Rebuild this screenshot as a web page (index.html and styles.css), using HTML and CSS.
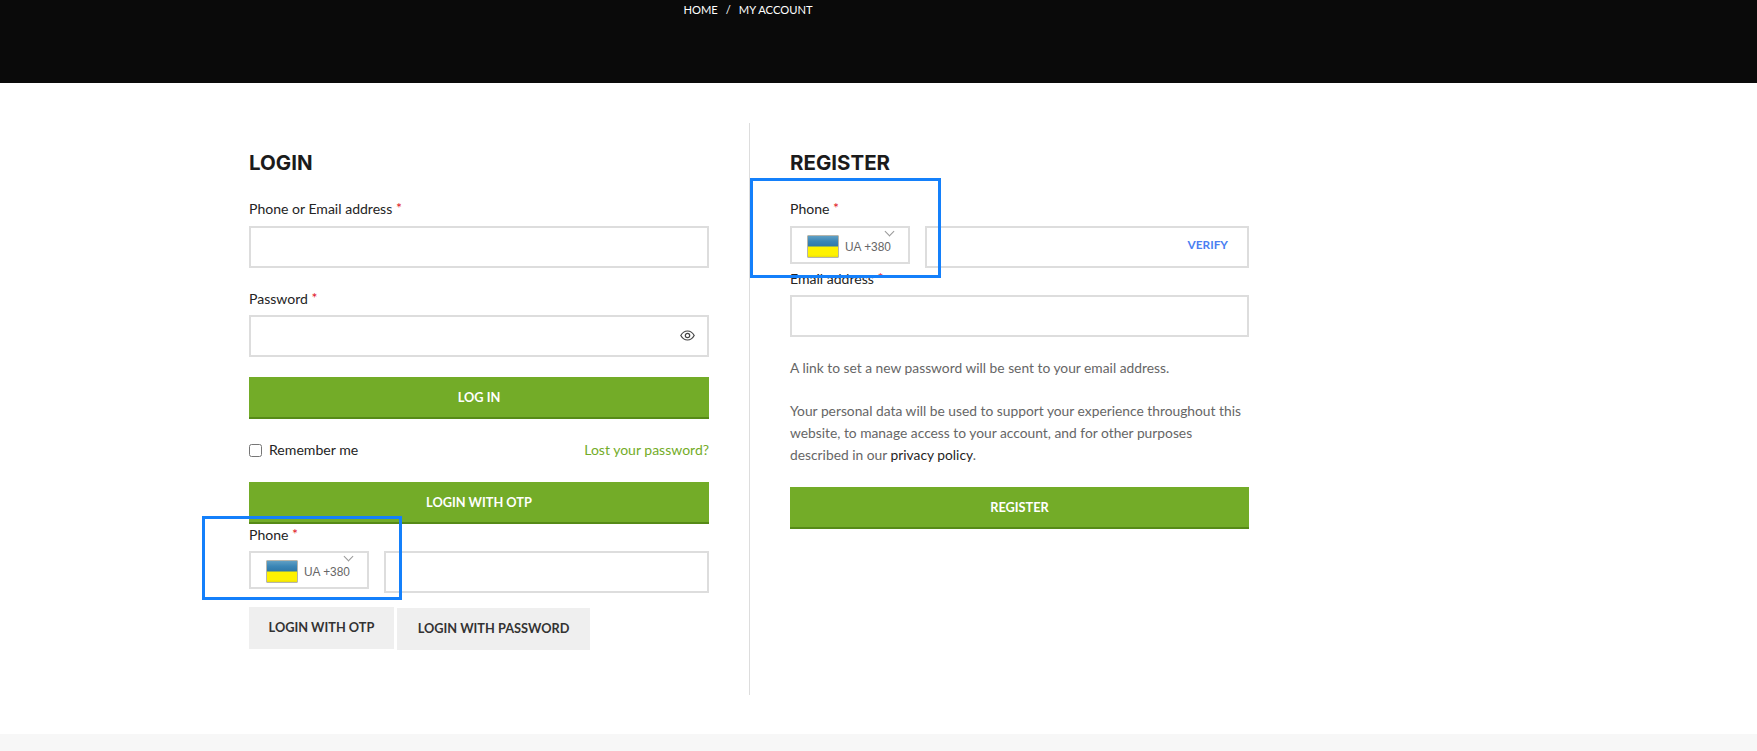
FILE: index.html
```html
<!DOCTYPE html>
<html lang="en">
<head>
<meta charset="utf-8">
<title>My Account</title>
<link rel="stylesheet" href="styles.css">
</head>
<body>
<header class="hero">
  <nav class="crumbs"><span>Home</span><span class="sep">/</span><span>My Account</span></nav>
</header>
<main class="account">
  <section class="col col-login">
    <h2 class="title">Login</h2>
    <label class="lbl lbl-first">Phone or Email address <i class="req">*</i></label>
    <div class="field"></div>
    <label class="lbl lbl-pass">Password <i class="req">*</i></label>
    <div class="field field-eye">
      <svg class="eye" width="15" height="11" viewBox="0 0 15 11" fill="none" stroke="#444" stroke-width="1.200"><path d="M.8 5.500C2.400 2.600 4.700 1 7.500 1s5.100 1.600 6.700 4.500C12.600 8.400 10.300 10 7.500 10S2.400 8.400.8 5.500z"/><circle cx="7.500" cy="5.500" r="2.200"/></svg>
    </div>
    <button class="btn btn-login">Log in</button>
    <div class="remember">
      <span class="check-wrap"><input type="checkbox" class="check"><span class="remember-text">Remember me</span></span>
      <a class="lost">Lost your password?</a>
    </div>
    <button class="btn btn-otp">Login with OTP</button>
    <label class="lbl lbl-phone">Phone <i class="req">*</i></label>
    <div class="phone-row phone-row-login">
      <div class="cc"><span class="flag"></span><span class="cc-text">UA +380</span><span class="chev"></span></div>
      <div class="field field-phone"></div>
    </div>
    <div class="alt-row">
      <button class="alt">Login with OTP</button>
      <button class="alt alt-pass">Login with password</button>
    </div>
  </section>
  <section class="col col-reg">
    <h2 class="title">Register</h2>
    <label class="lbl lbl-first">Phone <i class="req">*</i></label>
    <div class="phone-row">
      <div class="cc"><span class="flag"></span><span class="cc-text">UA +380</span><span class="chev"></span></div>
      <div class="field field-phone field-verify"><span class="verify">Verify</span></div>
    </div>
    <label class="lbl lbl-email">Email address <i class="req">*</i></label>
    <div class="field field-email"></div>
    <p class="copy copy-link">A link to set a new password will be sent to your email address.</p>
    <p class="copy copy-data">Your personal data will be used to support your experience throughout this website, to manage access to your account, and for other purposes described in our <a class="policy">privacy policy</a>.</p>
    <button class="btn btn-reg">Register</button>
  </section>
</main>
<footer class="foot"></footer>
<div class="mark mark-login"></div>
<div class="mark mark-reg"></div>
</body>
</html>
```
FILE: styles.css
```css
* { box-sizing: border-box; }
html, body { margin: 0; padding: 0; }
body {
  position: relative;
  height: 751px;
  overflow: hidden;
  background: #fff;
  font-family: Lato, "Liberation Sans", sans-serif;
  font-size: 14px;
  color: #242424;
}
.hero { height: 83px; background: #0a0a0a; padding-top: 3px; }
.crumbs {
  display: flex;
  justify-content: center;
  padding-right: 261px;
  color: #fff;
  font-size: 11.200px;
  line-height: 14px;
  text-transform: uppercase;
}
.sep { margin: 0 8px; }
.account {
  display: flex;
  align-items: flex-start;
  margin: 40px 0 0 249px;
  height: 572px;
}
.col-login { width: 501px; height: 572px; padding-right: 40px; border-right: 1px solid #ddd; }
.col-reg { width: 499px; padding-left: 40px; }
.title {
  margin: 28px 0 0;
  font-family: Inter, "Open Sans", sans-serif;
  font-size: 20.500px;
  line-height: 24px;
  font-weight: 700;
  color: #1b1b1b;
  text-transform: uppercase;
}
.lbl { display: block; font-size: 14.050px; line-height: 18px; }
.req { color: #e01020; font-style: normal; position: relative; top: -1px; }
.lbl-first { margin-top: 25px; }
.lbl-pass { margin-top: 22px; }
.lbl-phone { margin-top: 2px; }
.lbl-email { margin-top: 2px; }
.field { height: 42px; margin-top: 8px; border: 2px solid #ddd; background: #fff; }
.field-eye { display: flex; align-items: center; justify-content: flex-end; padding: 0 12px 2px 0; }
.lbl-pass + .field { margin-top: 7px; }
.field-email { margin-top: 7px; }
.btn {
  display: block;
  width: 100%;
  height: 42px;
  padding: 0;
  border: 0;
  border-bottom: 2px solid #568a17;
  background: #73ac28;
  color: #fff;
  font: 700 12.750px Lato, sans-serif;
  text-transform: uppercase;
}
.btn-login { margin-top: 20px; }
.remember {
  display: flex;
  justify-content: space-between;
  align-items: center;
  height: 63px;
  padding-bottom: 2px;
  line-height: 20px;
}
.check-wrap { display: flex; align-items: center; }
.check { width: 13px; height: 13px; margin: 2px 7px 0 0; }
.remember-text { font-size: 14.100px; }
.lost { color: #73ac28; }
.phone-row { display: flex; align-items: flex-start; margin-top: 8px; }
.phone-row-login { margin-top: 7px; }
.cc {
  position: relative;
  display: flex;
  align-items: center;
  flex: none;
  width: 120px;
  height: 38px;
  padding-left: 15px;
  border: 2px solid #ddd;
}
.flag {
  flex: none;
  width: 32px;
  height: 23px;
  margin-top: 3px;
  border-radius: 1px;
  border: 1px solid #b5b5ac;
  background: linear-gradient(#5f9fc4 0, #3b86b6 25%, #2f78a8 49%, #fff200 51%, #fff200 90%, #e8dc10 100%);
}
.cc-text { margin-left: 6px; margin-top: 4px; font: 11.900px "Liberation Sans", sans-serif; color: #666; }
.chev {
  position: absolute;
  right: 15px;
  top: 0;
  width: 7px;
  height: 7px;
  border-right: 1px solid #999;
  border-bottom: 1px solid #999;
  transform: rotate(45deg);
}
.field-phone { flex: 1; margin-top: 0; margin-left: 15px; }
.field-verify { display: flex; align-items: center; justify-content: flex-end; padding: 0 19px 5px 0; }
.verify { color: #4b7ff2; font-size: 11.800px; font-weight: 700; text-transform: uppercase; }
.alt-row { display: flex; align-items: flex-start; margin-top: 14px; }
.alt {
  width: 145px;
  height: 42px;
  padding: 0 0 2px;
  border: 0;
  background: #efefef;
  color: #333;
  font: 700 12.750px Lato, sans-serif;
  text-transform: uppercase;
}
.alt-pass { width: 193px; margin: 1px 0 0 3px; }
.copy { margin: 0; font-size: 13.800px; line-height: 22px; color: #666; }
.copy-link { margin-top: 20px; }
.copy-data { margin-top: 21px; width: 460px; }
.policy { color: #1f1f1f; }
.btn-reg { margin-top: 21px; }
.foot { position: absolute; left: 0; right: 0; top: 734px; height: 17px; background: #f7f7f7; }
.mark { position: absolute; border: 3px solid #1480fb; pointer-events: none; }
.mark-login { left: 202px; top: 516px; width: 200px; height: 84px; }
.mark-reg { left: 750px; top: 178px; width: 191px; height: 100px; }
```
